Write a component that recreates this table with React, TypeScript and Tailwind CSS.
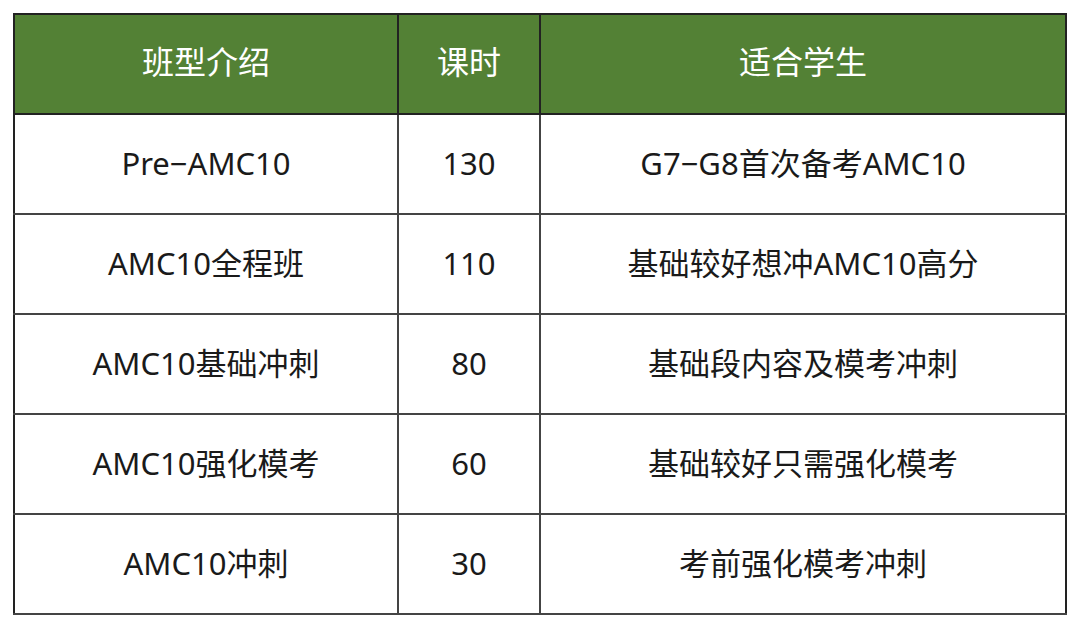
import React from 'react';

const rows = [
    { name: 'Pre−AMC10', hours: '130', target: 'G7−G8首次备考AMC10' },
    { name: 'AMC10全程班', hours: '110', target: '基础较好想冲AMC10高分' },
    { name: 'AMC10基础冲刺', hours: '80', target: '基础段内容及模考冲刺' },
    { name: 'AMC10强化模考', hours: '60', target: '基础较好只需强化模考' },
    { name: 'AMC10冲刺', hours: '30', target: '考前强化模考冲刺' },
];

export default function App() {
    return (
        <div className="w-[1080px] h-[625px] bg-white pt-[13px] pl-[13px]" style={{ fontFamily: '"Noto Sans", "Noto Sans CJK SC", sans-serif' }}>
            <table className="w-[1054px] border-collapse border-2 border-[#222] text-[31px] text-[#1a1a1a]">
                <thead>
                    <tr className="h-[100px] bg-[#538135] text-white text-[32px]">
                        <th className="w-[384px] border-2 border-[#222] font-normal pb-[4px]">班型介绍</th>
                        <th className="w-[142px] border-2 border-[#222] font-normal pb-[4px]">课时</th>
                        <th className="border-2 border-[#222] font-normal pb-[4px]">适合学生</th>
                    </tr>
                </thead>
                <tbody>
                    {rows.map((r) => (
                        <tr key={r.name} className="h-[100px]">
                            <td className="border-2 border-[#444] border-l-[#222] text-center pb-[2px]">{r.name}</td>
                            <td className="border-2 border-[#444] text-center pb-[2px]">{r.hours}</td>
                            <td className="border-2 border-[#444] border-r-[#222] text-center pb-[2px]">{r.target}</td>
                        </tr>
                    ))}
                </tbody>
            </table>
        </div>
    );
}
